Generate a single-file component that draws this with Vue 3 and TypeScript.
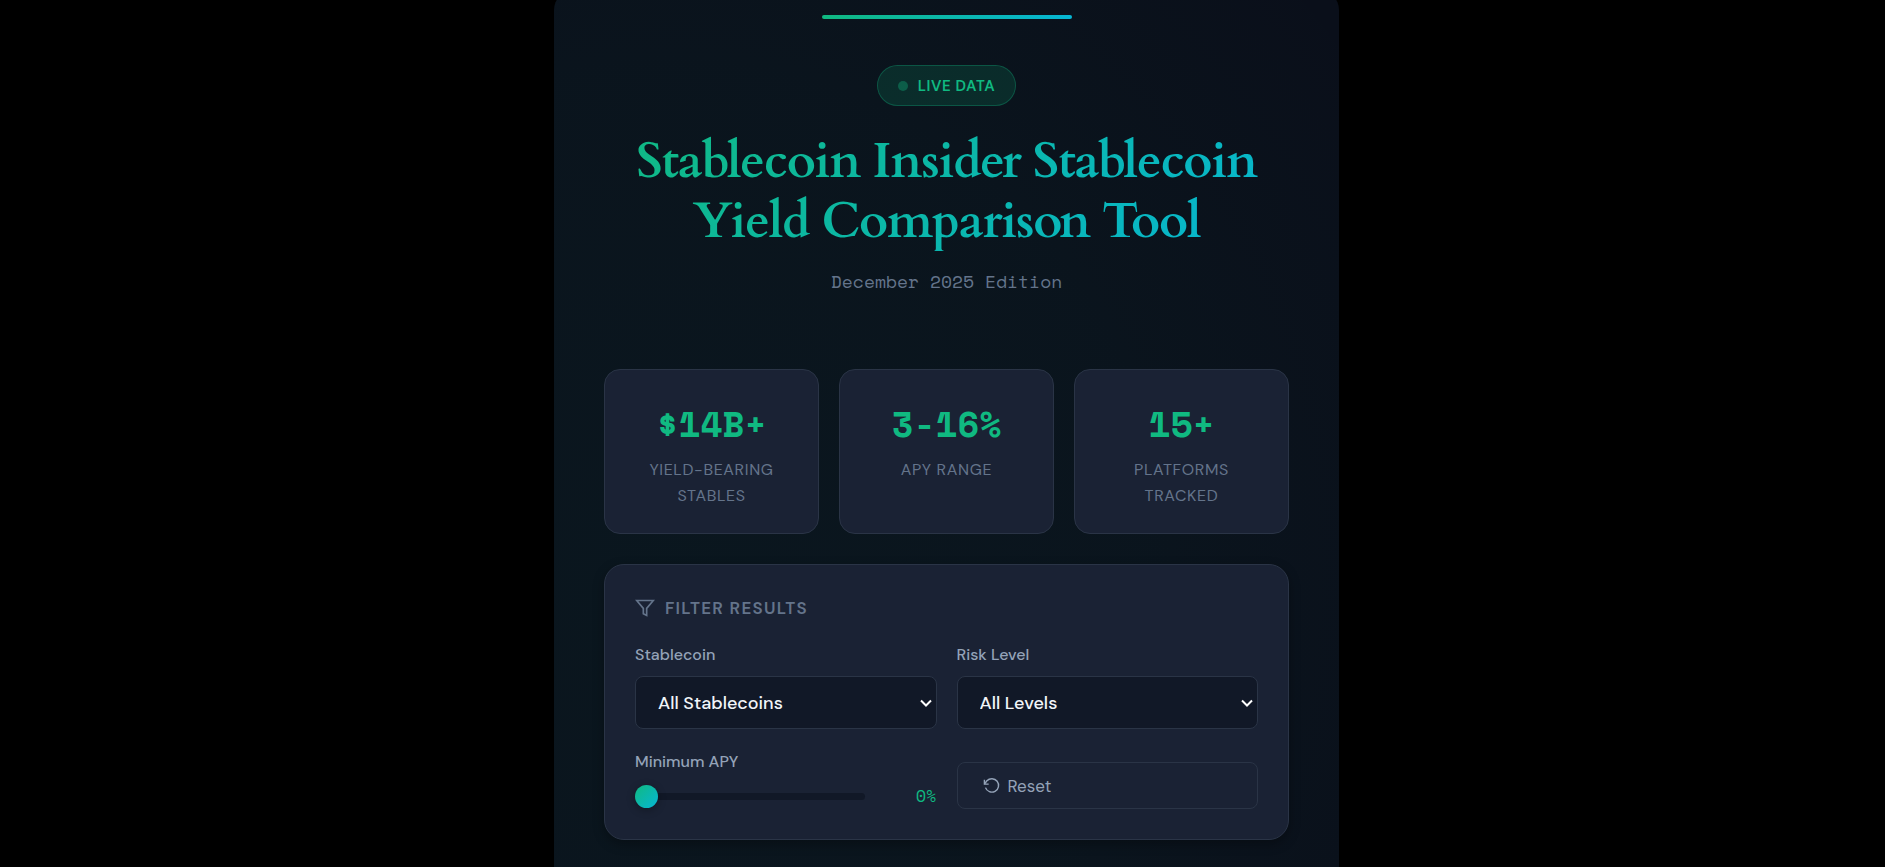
<script setup lang="ts">
import { ref } from 'vue'

interface Stat {
  value: string
  label: string
}

const stats: Stat[] = [
  { value: '$14B+', label: 'Yield-Bearing Stables' },
  { value: '3-16%', label: 'APY Range' },
  { value: '15+', label: 'Platforms Tracked' },
]

const stablecoin = ref('All Stablecoins')
const risk = ref('All Levels')
const minApy = ref(0)

function reset(): void {
  stablecoin.value = 'All Stablecoins'
  risk.value = 'All Levels'
  minApy.value = 0
}
</script>

<template>
  <div class="page">
    <main class="panel">
      <div class="accent-bar"></div>
      <header class="hero">
        <div class="badge"><span class="dot"></span>Live Data</div>
        <h1>Stablecoin Insider Stablecoin Yield Comparison Tool</h1>
        <p class="edition">December 2025 Edition</p>
      </header>

      <section class="stats">
        <article v-for="s in stats" :key="s.value" class="stat">
          <div class="stat-value">{{ s.value }}</div>
          <div class="stat-label">{{ s.label }}</div>
        </article>
      </section>

      <section class="filters">
        <h2>
          <svg width="20" height="20" viewBox="0 0 24 24" fill="none" stroke="currentColor" stroke-width="2" aria-hidden="true">
            <path d="M22 3H2l8 9.46V19l4 2v-8.54L22 3z" />
          </svg>
          Filter Results
        </h2>
        <div class="grid">
          <div class="field">
            <label for="coin">Stablecoin</label>
            <div class="select">
              <select id="coin" v-model="stablecoin">
                <option>All Stablecoins</option>
              </select>
              <svg class="chevron" width="12" height="8" viewBox="0 0 12 8" aria-hidden="true">
                <path d="M1 1.500 6 6.500l5-5" />
              </svg>
            </div>
          </div>
          <div class="field">
            <label for="risk">Risk Level</label>
            <div class="select">
              <select id="risk" v-model="risk">
                <option>All Levels</option>
              </select>
              <svg class="chevron" width="12" height="8" viewBox="0 0 12 8" aria-hidden="true">
                <path d="M1 1.500 6 6.500l5-5" />
              </svg>
            </div>
          </div>
          <div class="field">
            <label for="apy">Minimum APY</label>
            <div class="range">
              <input id="apy" v-model.number="minApy" type="range" min="0" max="20" />
              <output for="apy">{{ minApy }}%</output>
            </div>
          </div>
          <button type="button" class="reset" @click="reset">
            <svg width="17" height="17" viewBox="0 0 24 24" fill="none" stroke="currentColor" stroke-width="2" aria-hidden="true">
              <path d="M2 4v6h6" />
              <path d="M3.500 15a9.500 9.500 0 1 0 2-9.600L2 10" />
            </svg>
            Reset
          </button>
        </div>
      </section>
    </main>
  </div>
</template>

<style>
body {
  background: #000;
}
</style>

<style scoped>
* {
  box-sizing: border-box;
}

.page {
  height: 100vh;
  padding-left: 8px;
  overflow: hidden;
  font-family: "DM Sans", "Open Sans", "Liberation Sans", sans-serif;
  font-size: 16px;
  line-height: 26px;
  color: #f1f5f9;
}

.panel {
  width: 100%;
  max-width: 785px;
  min-height: calc(100vh + 40px);
  margin: -10px auto 0;
  padding: 25px 50px 50px;
  border-radius: 20px;
  background:
    radial-gradient(ellipse 110% 100% at 15% 65%, rgba(16, 185, 129, 0.045) 0%, rgba(16, 185, 129, 0.03) 55%, transparent 100%),
    #0a0f1a;
}

.accent-bar {
  width: 250px;
  height: 4px;
  margin: 0 auto;
  border-radius: 2px;
  background: linear-gradient(90deg, #10b981, #06b6d4);
}

.hero {
  padding: 46px 0 73px;
  text-align: center;
}

.badge {
  display: inline-flex;
  align-items: center;
  gap: 10px;
  height: 41px;
  padding: 0 20px;
  border: 1px solid rgba(16, 185, 129, 0.3);
  border-radius: 21px;
  background: rgba(16, 185, 129, 0.15);
  color: #10b981;
  font-size: 15px;
  font-weight: 600;
  letter-spacing: 0.04em;
  text-transform: uppercase;
}

.dot {
  width: 10px;
  height: 10px;
  border-radius: 50%;
  background: rgba(16, 185, 129, 0.35);
}

h1 {
  margin: 25px 0 15px;
  font-family: Cardo, "Cormorant Garamond", "Liberation Serif", serif;
  font-size: 50px;
  font-weight: 600;
  line-height: 60px;
  letter-spacing: -0.025em;
  background: linear-gradient(135deg, #10b981, #06b6d4);
  -webkit-background-clip: text;
  background-clip: text;
  color: transparent;
}

.edition {
  margin: 0;
  font-family: "Space Mono", "Liberation Mono", monospace;
  font-size: 18px;
  line-height: 30px;
  color: #64748b;
}

.stats {
  display: grid;
  grid-template-columns: repeat(3, 1fr);
  gap: 20px;
}

.stat {
  padding: 25px 25px 24px;
  border: 1px solid #2a3446;
  border-radius: 16px;
  background: #1a2234;
  text-align: center;
}

.stat-value {
  margin-bottom: 4px;
  font-family: "Space Mono", "Liberation Mono", monospace;
  font-size: 36px;
  font-weight: 700;
  line-height: 58px;
  color: #10b981;
}

.stat-label {
  color: #64748b;
  letter-spacing: 0.04em;
  text-transform: uppercase;
}

.filters {
  margin-top: 30px;
  padding: 30px;
  border: 1px solid #2a3446;
  border-radius: 20px;
  background: #1a2234;
  box-shadow: 0 4px 12px rgba(0, 0, 0, 0.3);
}

h2 {
  display: flex;
  align-items: center;
  gap: 10px;
  margin: 0 0 21px;
  font-size: 17px;
  font-weight: 600;
  line-height: 26px;
  letter-spacing: 0.075em;
  text-transform: uppercase;
  color: #64748b;
}

.grid {
  display: grid;
  grid-template-columns: 1fr 1fr;
  align-items: end;
  gap: 20px;
}

.field {
  display: flex;
  flex-direction: column;
  gap: 8px;
}

label {
  font-weight: 500;
  color: #94a3b8;
}

.select {
  position: relative;
  display: flex;
}

select {
  width: 100%;
  height: 53px;
  padding: 0 22px;
  border: 1px solid #2a3446;
  border-radius: 8px;
  background: #111827;
  color: #f1f5f9;
  font-family: inherit;
  font-size: 18px;
  font-weight: 500;
  appearance: none;
}

.chevron {
  position: absolute;
  top: 23px;
  right: 5px;
  fill: none;
  stroke: #fff;
  stroke-width: 2;
  pointer-events: none;
}

.range {
  display: flex;
  align-items: center;
  gap: 16px;
  height: 26px;
}

input[type="range"] {
  flex: 1;
  min-width: 0;
  height: 7px;
  margin: 0;
  border-radius: 4px;
  background: #111827;
  appearance: none;
}

input[type="range"]::-webkit-slider-thumb {
  width: 23px;
  height: 23px;
  border: 0;
  border-radius: 50%;
  background: linear-gradient(135deg, #10b981, #06b6d4);
  box-shadow: 0 2px 8px rgba(0, 0, 0, 0.3);
  appearance: none;
}

output {
  min-width: 56px;
  font-family: "Space Mono", "Liberation Mono", monospace;
  font-size: 17px;
  color: #10b981;
  text-align: right;
}

.reset {
  display: flex;
  align-items: center;
  gap: 8px;
  height: 47px;
  padding: 0 25px;
  border: 1px solid #2a3446;
  border-radius: 8px;
  background: transparent;
  color: #94a3b8;
  font-family: inherit;
  font-size: 17px;
}
</style>
